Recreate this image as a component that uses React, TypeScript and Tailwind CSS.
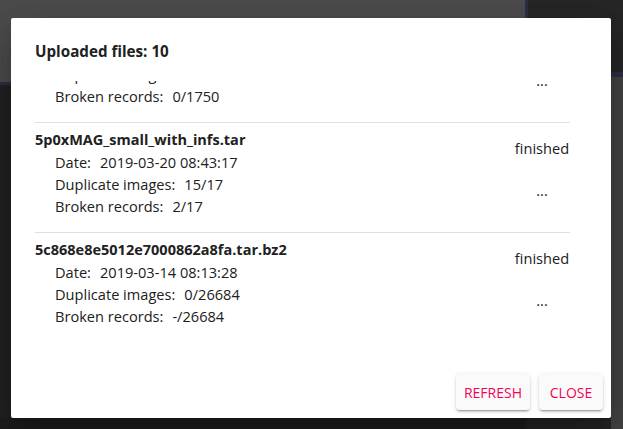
import React from 'react';

type Upload = {
  name: string;
  date: string;
  duplicates: string;
  broken: string;
  status: string;
};

const uploads: Upload[] = [
  { name: '5c7f1a2b3d4e5f60718293a4.tar', date: '2019-03-22 10:12:05', duplicates: '0/1750', broken: '0/1750', status: 'finished' },
  { name: '5p0xMAG_small_with_infs.tar', date: '2019-03-20 08:43:17', duplicates: '15/17', broken: '2/17', status: 'finished' },
  { name: '5c868e8e5012e7000862a8fa.tar.bz2', date: '2019-03-14 08:13:28', duplicates: '0/26684', broken: '-/26684', status: 'finished' },
];

const Detail: React.FC<{ label: string; value: string }> = ({ label, value }) => (
  <div className="leading-[22px]">
    {label}
    <span className="ml-[9px]">{value}</span>
  </div>
);

const UploadItem: React.FC<{ item: Upload }> = ({ item }) => (
  <div className="flex h-[110px] shrink-0 border-t border-[#e0e0e0]">
    <div className="flex-1 pt-[6px]">
      <div className="text-[14.5px] font-bold leading-[22px]">{item.name}</div>
      <div className="pl-[20px]">
        <Detail label="Date:" value={item.date} />
        <Detail label="Duplicate images:" value={item.duplicates} />
        <Detail label="Broken records:" value={item.broken} />
      </div>
    </div>
    <div className="w-[56px] pt-[14px] text-center">
      <div className="leading-[22px]">{item.status}</div>
      <div className="mt-[20px] leading-[22px]">...</div>
    </div>
  </div>
);

const App: React.FC = () => {
  return (
    <div className="relative h-[429px] w-[623px] overflow-hidden bg-[#222222] font-['Open_Sans',sans-serif]">
      {/* Backdrop: the app behind the modal */}
      <div className="flex h-full">
        <div className="flex w-[525px] flex-col">
          <div className="h-[85px] border-b-[3px] border-[#2c2f47] bg-[#4c4c4c]" />
          <div className="flex-1 bg-[#222222]" />
          <div className="h-[11px] bg-[#1e1e1e]" />
        </div>
        <div className="h-[85px] w-[3px] bg-[#2c2f47]" />
        <div className="flex flex-1 flex-col">
          <div className="h-[77px] border-b-[5px] border-[#2c2f47] bg-[#262626]" />
          <div className="flex flex-1">
            <div className="w-[83px] bg-[#262626]" />
            <div className="flex-1 bg-[#444444]" />
          </div>
        </div>
      </div>

      {/* Dialog */}
      <div className="absolute left-[11px] top-[18px] flex h-[400px] w-[600px] flex-col rounded-[2px] bg-white text-[14.6px] text-[#212121] shadow-[0_11px_15px_-7px_rgba(0,0,0,0.2),0_24px_38px_3px_rgba(0,0,0,0.14),0_9px_46px_8px_rgba(0,0,0,0.12)]">
        <div className="px-[24px] pb-[18px] pt-[21px] text-[15.2px] font-bold leading-[24px]">Uploaded files: 10</div>

        <div className="flex h-[285px] flex-col justify-end overflow-hidden pb-[24px] pl-[24px] pr-[41px]">
          {uploads.map((u) => (
            <UploadItem key={u.name} item={u} />
          ))}
        </div>

        <div className="flex justify-end gap-[9px] p-[8px]">
          <button className="h-[36px] min-w-[64px] rounded-[4px] bg-[#fafafa] px-[8px] text-[14px] font-medium uppercase text-[#f50057] shadow-[0_3px_1px_-2px_rgba(0,0,0,0.2),0_2px_2px_0_rgba(0,0,0,0.14),0_1px_5px_0_rgba(0,0,0,0.12)]">
            Refresh
          </button>
          <button className="h-[36px] min-w-[64px] rounded-[4px] bg-[#fafafa] px-[8px] text-[14px] font-medium uppercase text-[#f50057] shadow-[0_3px_1px_-2px_rgba(0,0,0,0.2),0_2px_2px_0_rgba(0,0,0,0.14),0_1px_5px_0_rgba(0,0,0,0.12)]">
            Close
          </button>
        </div>
      </div>
    </div>
  );
};

export default App;
